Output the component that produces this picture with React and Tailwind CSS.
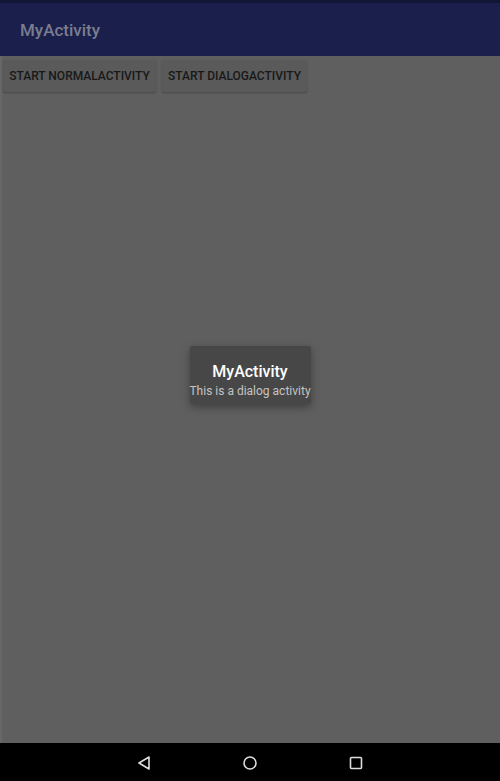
export default function App() {
  return (
    <div className="w-[500px] h-[781px] flex flex-col bg-[#5f5f5f] overflow-hidden" style={{ fontFamily: "Roboto, 'Liberation Sans', sans-serif" }}>
      <div className="h-[3px] bg-[#111637]" />
      <div className="h-[53px] bg-[#1a1f4b] flex items-center pl-[20px] pt-[2px]">
        <span className="text-[#7a7d8f] text-[17px] font-medium">MyActivity</span>
      </div>
      <div className="flex-1 flex flex-col border-l-2 border-[#676767] relative">
        <div className="flex gap-[6px] pl-[1px] pt-[4px]">
          <div className="h-[32px] w-[153px] bg-[#5a5a5a] rounded-[2px] shadow-[0_1px_2px_rgba(0,0,0,0.25)] flex items-center justify-center text-[12px] font-medium text-[#181818]">START NORMALACTIVITY</div>
          <div className="h-[32px] w-[145px] bg-[#5a5a5a] rounded-[2px] shadow-[0_1px_2px_rgba(0,0,0,0.25)] flex items-center justify-center text-[12px] font-medium text-[#181818]">START DIALOGACTIVITY</div>
        </div>
        <div className="flex-1 flex items-center justify-center pb-[85px] pr-[2px]">
          <div className="w-[121px] h-[58px] bg-[#474747] rounded-[2px] shadow-[0_3px_8px_rgba(0,0,0,0.35)] flex flex-col items-center pt-[16px] whitespace-nowrap">
            <span className="text-white text-[16px] font-medium leading-[20px]">MyActivity</span>
            <span className="text-[#c4c4c4] text-[12px] leading-[16px] mt-[1px]">This is a dialog activity</span>
          </div>
        </div>
      </div>
      <div className="h-[38px] bg-black flex items-center justify-center relative">
        <svg className="absolute left-[136px] top-[12px]" width="16" height="16" viewBox="0 0 16 16">
          <path d="M13 2 L3 8 L13 14 Z" fill="none" stroke="#ddd" strokeWidth="1.6" strokeLinejoin="round" />
        </svg>
        <svg className="absolute left-[242px] top-[12px]" width="16" height="16" viewBox="0 0 16 16">
          <circle cx="8" cy="8" r="6" fill="none" stroke="#ddd" strokeWidth="1.6" />
        </svg>
        <svg className="absolute left-[348px] top-[12px]" width="16" height="16" viewBox="0 0 16 16">
          <rect x="2.5" y="2.5" width="11" height="11" rx="1" fill="none" stroke="#ddd" strokeWidth="1.6" />
        </svg>
      </div>
    </div>
  );
}
